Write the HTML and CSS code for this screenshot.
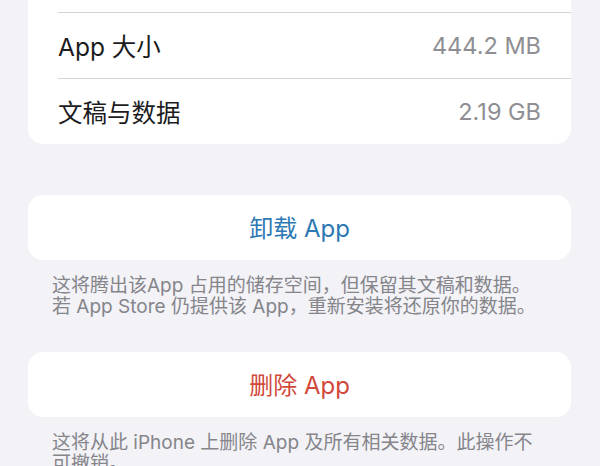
FILE: index.html
```
<!DOCTYPE html>
<html lang="zh-CN">
<head>
<meta charset="utf-8">
<link rel="stylesheet" href="styles.css">
</head>
<body>
<main class="page">
  <section class="card card-top">
    <div class="stub"></div>
    <div class="row">
      <span class="label">App 大小</span>
      <span class="value">444.2 MB</span>
    </div>
    <div class="row last">
      <span class="label">文稿与数据</span>
      <span class="value">2.19 GB</span>
    </div>
  </section>

  <section class="card action">
    <span class="btn blue">卸载 App</span>
  </section>
  <p class="note">这将腾出该App 占用的储存空间，但保留其文稿和数据。<br>若 App Store 仍提供该 App，重新安装将还原你的数据。</p>

  <section class="card action second">
    <span class="btn red">删除 App</span>
  </section>
  <p class="note">这将从此 iPhone 上删除 App 及所有相关数据。此操作不<br>可撤销。</p>
</main>
</body>
</html>
```
FILE: styles.css
```
html, body {
  margin: 0;
  padding: 0;
  background: #f2f2f7;
  height: 100%;
  overflow: hidden;
}
.page {
  padding: 0 29px 0 28px;
  font-family: "Inter", "Noto Sans CJK SC", sans-serif;
}
.card {
  background: #ffffff;
  border-radius: 15px;
}
.card-top {
  border-radius: 0 0 15px 15px;
}
.stub {
  height: 12px;
  margin-left: 30px;
  border-bottom: 1px solid #d4d4d8;
}
.row {
  height: 65px;
  margin-left: 30px;
  padding-right: 30px;
  display: flex;
  align-items: center;
  justify-content: space-between;
  border-bottom: 1px solid #d4d4d8;
  font-size: 24.5px;
}
.row.last {
  border-bottom: none;
}
.label {
  color: #1c1c1e;
}
.value {
  color: #8e8e93;
  font-size: 23.5px;
}
.action {
  margin-top: 51px;
  height: 65px;
  display: flex;
  align-items: center;
  justify-content: center;
}
.action.second {
  margin-top: 35px;
}
.btn {
  font-size: 24px;
  padding-bottom: 3px;
}
.blue { color: #2d79b4; }
.red { color: #d2483b; }
.note {
  margin: 15px 0 0 0;
  padding-left: 24px;
  font-size: 19px;
  line-height: 21px;
  color: #85858a;
}
```
